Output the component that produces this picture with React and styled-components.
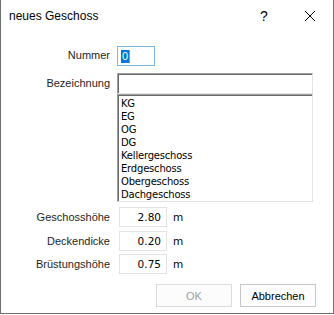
import { Fragment } from "react";
import styled, { createGlobalStyle } from "styled-components";

const Global = createGlobalStyle`
  html, body {
    margin: 0;
    padding: 0;
    background: #ffffff;
  }
  * {
    box-sizing: border-box;
  }
`;

const Window = styled.div`
  width: 334px;
  height: 314px;
  background: #ffffff;
  border: 1px solid #6f6f6f;
  border-top: none;
  display: flex;
  flex-direction: column;
  font-family: "Liberation Sans", Arial, sans-serif;
  font-size: 11px;
  color: #000;
`;

const TitleBar = styled.div`
  height: 32px;
  display: flex;
  align-items: center;
  padding-left: 8px;
`;

const Title = styled.div`
  flex: 1;
  font-size: 12px;
  color: #000;
`;

const TitleButton = styled.div`
  width: 46px;
  height: 32px;
  display: flex;
  align-items: center;
  justify-content: center;
  font-size: 14px;
`;

const Form = styled.div`
  display: grid;
  grid-template-columns: 109px 1fr;
  column-gap: 7px;
  padding-top: 14px;
  padding-right: 19px;
`;

const Label = styled.div`
  text-align: right;
  align-self: start;
  height: ${(p) => p.h || 20}px;
  line-height: ${(p) => p.h || 20}px;
  margin-top: ${(p) => p.mt || 0}px;
  color: #1e1e1e;
`;

const Cell = styled.div`
  margin-top: ${(p) => p.mt || 0}px;
  margin-left: ${(p) => p.ml || 0}px;
  display: flex;
  align-items: center;
  gap: 5px;
`;

const NumberBox = styled.div`
  width: 38px;
  height: 20px;
  border: 1px solid #7ab8e0;
  display: flex;
  align-items: center;
  padding-left: 3px;
`;

const Selected = styled.span`
  background: #0078d7;
  color: #ffffff;
  padding: 0 1px;
  line-height: 13px;
  border-right: 1.5px solid #ff8a00;
`;

const Combo = styled.div`
  display: flex;
  flex-direction: column;
  width: 196px;
`;

const ComboEdit = styled.div`
  height: 21px;
  border-top: 1px solid #a0a0a0;
  border-left: 1px solid #a0a0a0;
  border-right: 1px solid #e3e3e3;
  border-bottom: 1px solid #e3e3e3;
  box-shadow: inset 1px 1px 0 #696969;
`;

const ListBox = styled.div`
  height: 108px;
  border-top: 1px solid #a0a0a0;
  border-left: 1px solid #a0a0a0;
  border-right: 1px solid #e3e3e3;
  border-bottom: 1px solid #e3e3e3;
  box-shadow: inset 1px 1px 0 #696969;
  padding: 2px 0 0 3px;
  display: flex;
  flex-direction: column;
`;

const ListItem = styled.div`
  height: 13px;
  line-height: 13px;
  font-family: "DejaVu Sans", Tahoma, sans-serif;
  font-size: 10px;
  letter-spacing: -0.2px;
`;

const ValueBox = styled.div`
  width: 48px;
  height: 20px;
  border: 1px solid #e3e3e3;
  text-align: right;
  line-height: 18px;
  padding-right: 5px;
  font-family: "DejaVu Sans", Tahoma, sans-serif;
  font-size: 10.5px;
`;

const Unit = styled.span`
  font-family: "DejaVu Sans", Tahoma, sans-serif;
  font-size: 10.5px;
  padding-left: 1px;
`;

const ButtonRow = styled.div`
  display: flex;
  justify-content: flex-end;
  gap: 8px;
  padding-right: 17px;
  margin-top: 10px;
`;

const Button = styled.div`
  width: 76px;
  height: 23px;
  display: flex;
  align-items: center;
  justify-content: center;
  background: ${(p) => (p.disabled ? "#fcfcfc" : "#fdfdfd")};
  border: 1px solid ${(p) => (p.disabled ? "#dcdcdc" : "#c8c8c8")};
  color: ${(p) => (p.disabled ? "#a0a0a0" : "#000")};
`;

const items = [
  "KG",
  "EG",
  "OG",
  "DG",
  "Kellergeschoss",
  "Erdgeschoss",
  "Obergeschoss",
  "Dachgeschoss",
];

const values = [
  { label: "Geschosshöhe", value: "2.80", mt: 5 },
  { label: "Deckendicke", value: "0.20", mt: 4 },
  { label: "Brüstungshöhe", value: "0.75", mt: 3 },
];

export default function App() {
  return (
    <>
      <Global />
      <Window>
        <TitleBar>
          <Title>neues Geschoss</Title>
          <TitleButton>?</TitleButton>
          <TitleButton>
            <svg width="12" height="12" viewBox="0 0 12 12">
              <path d="M1 1 L11 11 M11 1 L1 11" stroke="#000" strokeWidth="1" />
            </svg>
          </TitleButton>
        </TitleBar>
        <Form>
          <Label mt={-1}>Nummer</Label>
          <Cell>
            <NumberBox>
              <Selected>0</Selected>
            </NumberBox>
          </Cell>

          <Label mt={7} h={21}>
            Bezeichnung
          </Label>
          <Cell mt={7}>
            <Combo>
              <ComboEdit />
              <ListBox>
                {items.map((it) => (
                  <ListItem key={it}>{it}</ListItem>
                ))}
              </ListBox>
            </Combo>
          </Cell>

          {values.map((v) => (
            <Fragment key={v.label}>
              <Label mt={v.mt}>{v.label}</Label>
              <Cell mt={v.mt} ml={2}>
                <ValueBox>{v.value}</ValueBox>
                <Unit>m</Unit>
              </Cell>
            </Fragment>
          ))}
        </Form>
        <ButtonRow>
          <Button disabled>OK</Button>
          <Button>Abbrechen</Button>
        </ButtonRow>
      </Window>
    </>
  );
}
